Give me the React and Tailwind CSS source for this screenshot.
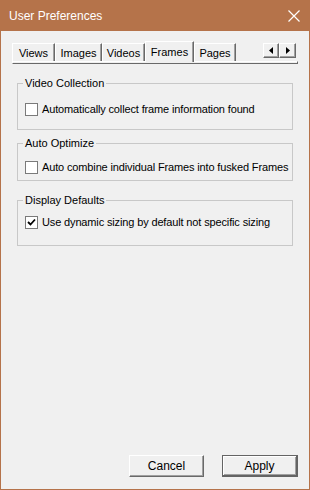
import { useState } from 'react';

const tabs = [
  { name: 'Views', w: 'w-[43px]' },
  { name: 'Images', w: 'w-[47px]' },
  { name: 'Videos', w: 'w-[43px]' },
  { name: 'Frames', w: 'w-[49px]' },
  { name: 'Pages', w: 'w-[42px]' },
];

const CheckBox = ({ checked, onChange, label }) => (
  <label className="flex items-center gap-[4px] pl-[7px] cursor-default">
    <span
      onClick={onChange}
      className="w-[13px] h-[13px] border border-[#7a7a7a] bg-white flex items-center justify-center shrink-0"
    >
      {checked && (
        <svg width="9" height="9" viewBox="0 0 9 9">
          <path d="M1 4 L3.5 6.5 L8 1.5" stroke="#000" strokeWidth="1.8" fill="none" />
        </svg>
      )}
    </span>
    <span className="text-[11px] leading-[13px] tracking-[-0.14px] text-black whitespace-nowrap">{label}</span>
  </label>
);

const Group = ({ title, className, children }) => (
  <fieldset className={`ml-[16px] w-[276px] min-w-0 border border-[#c8c8c8] ${className}`}>
    <legend className="ml-[5px] px-[2px] text-[11px] leading-[13px] text-black">{title}</legend>
    {children}
  </fieldset>
);

const App = () => {
  const [active, setActive] = useState('Frames');
  const [collect, setCollect] = useState(false);
  const [combine, setCombine] = useState(false);
  const [dynamic, setDynamic] = useState(true);

  return (
    <div
      className="w-[310px] h-[490px] flex flex-col bg-[#b5734a] select-none"
      style={{ fontFamily: '"Liberation Sans", Arial, sans-serif' }}
    >
      {/* Title bar */}
      <div className="h-[31px] flex items-center justify-between pl-[9px] pr-[10px] shrink-0">
        <span className="text-white text-[12px]">User Preferences</span>
        <svg width="12" height="12" viewBox="0 0 12 12">
          <path d="M0.5 0.5 L11.5 11.5 M11.5 0.5 L0.5 11.5" stroke="#fff" strokeWidth="1.2" />
        </svg>
      </div>

      {/* Body */}
      <div className="flex-1 mx-[1px] mb-[1px] bg-[#f0f0f0] flex flex-col pt-[10px]">
        {/* Tabs */}
        <div className="ml-[11px] w-[285px] h-[20px] flex items-end">
          {tabs.map((t) =>
            t.name === active ? (
              <div
                key={t.name}
                className={`${t.w} h-[21px] mb-[-1px] relative z-10 bg-[#f0f0f0] border-l border-t border-white border-r border-r-[#696969] shadow-[inset_-1px_0_0_#a0a0a0] text-[11px] text-black flex items-start justify-center pt-[2px]`}
              >
                {t.name}
              </div>
            ) : (
              <div
                key={t.name}
                onClick={() => setActive(t.name)}
                className={`${t.w} h-[18px] bg-[#f0f0f0] border-l border-t border-white border-r border-r-[#696969] shadow-[inset_-1px_0_0_#a0a0a0] text-[11px] text-black flex items-center justify-center pt-[1px]`}
              >
                {t.name}
              </div>
            )
          )}
          <div className="flex-1" />
          <div className="self-start mt-[2px] mr-[1px] flex">
            <div className="w-[16px] h-[15px] border-l border-t border-white border-r border-b border-r-[#696969] border-b-[#696969] shadow-[inset_-1px_-1px_0_#a0a0a0] flex items-center justify-center">
              <svg width="4" height="7" viewBox="0 0 4 7">
                <path d="M4 0 L0 3.5 L4 7 Z" fill="#000" />
              </svg>
            </div>
            <div className="w-[17px] h-[15px] border-l border-t border-white border-r border-b border-r-[#696969] border-b-[#696969] shadow-[inset_-1px_-1px_0_#a0a0a0] flex items-center justify-center">
              <svg width="4" height="7" viewBox="0 0 4 7">
                <path d="M0 0 L4 3.5 L0 7 Z" fill="#000" />
              </svg>
            </div>
          </div>
        </div>
        <div className="ml-[11px] w-[286px] h-[3px] border-t border-l border-white border-r border-b border-r-[#696969] border-b-[#696969]" />

        <Group title="Video Collection" className="mt-[13px] h-[53px]">
          <div className="mt-[13px]">
            <CheckBox
              checked={collect}
              onChange={() => setCollect(!collect)}
              label="Automatically collect frame information found"
            />
          </div>
        </Group>

        <Group title="Auto Optimize" className="mt-[7px] h-[44px]">
          <div className="mt-[11px]">
            <CheckBox
              checked={combine}
              onChange={() => setCombine(!combine)}
              label="Auto combine individual Frames into fusked Frames"
            />
          </div>
        </Group>

        <Group title="Display Defaults" className="mt-[13px] h-[52px]">
          <div className="mt-[9px]">
            <CheckBox
              checked={dynamic}
              onChange={() => setDynamic(!dynamic)}
              label="Use dynamic sizing by default not specific sizing"
            />
          </div>
        </Group>

        {/* Buttons */}
        <div className="mt-auto flex justify-end gap-[18px] pr-[11px] pb-[12px]">
          <button className="w-[75px] h-[22px] bg-[#f0f0f0] border-l border-t border-white border-r border-b border-r-[#696969] border-b-[#696969] shadow-[inset_-1px_-1px_0_#a0a0a0] text-[12px] text-black">
            Cancel
          </button>
          <button className="w-[76px] h-[22px] bg-[#f0f0f0] border border-[#646464] border-r-2 border-b-2 text-[12px] text-black shadow-[inset_1px_1px_0_#fff,inset_-1px_-1px_0_#a0a0a0]">
            Apply
          </button>
        </div>
      </div>
    </div>
  );
};

export default App;
